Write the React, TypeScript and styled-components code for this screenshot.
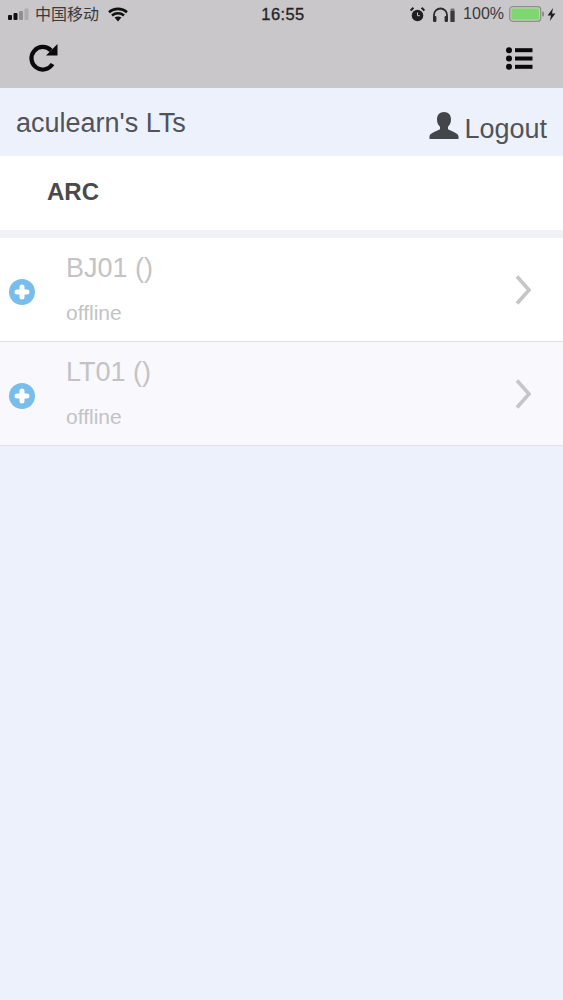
import React from "react";
import styled, { createGlobalStyle } from "styled-components";

const GlobalStyle = createGlobalStyle`
    html, body {
        margin: 0;
        padding: 0;
        background: #edf1fb;
    }
    body {
        font-family: "Liberation Sans", Arial, sans-serif;
    }
`;

const Page = styled.div`
    width: 563px;
    height: 1000px;
    overflow: hidden;
    background: #edf1fb;
    display: flex;
    flex-direction: column;
`;

const TopBar = styled.div`
    height: 88px;
    background: #c9c7c9;
    flex: none;
`;

const StatusBar = styled.div`
    height: 28px;
    display: grid;
    grid-template-columns: 1fr auto 1fr;
    align-items: center;
    padding: 0 7px 0 8px;
    color: #3a3a3c;
    font-size: 15px;
`;

const StatusLeft = styled.div`
    display: flex;
    align-items: center;
`;

const Carrier = styled.span`
    font-family: "Noto Sans CJK SC", "Liberation Sans", sans-serif;
    font-size: 16px;
    line-height: 20px;
    margin: -2px 0 0 4px;
`;

const StatusRight = styled.div`
    display: flex;
    align-items: center;
    justify-content: flex-end;
`;

const Clock = styled.span`
    font-size: 16.5px;
    font-weight: 400;
    color: #232325;
    -webkit-text-stroke: 0.3px #232325;
    letter-spacing: 0.4px;
    margin-left: 2px;
`;

const Percent = styled.span`
    font-size: 16px;
    margin: 0 5px 0 8px;
`;

const ToolRow = styled.div`
    height: 60px;
    display: flex;
    align-items: center;
    justify-content: space-between;
    padding: 0 30px 2px 28px;
`;

const Header = styled.div`
    height: 68px;
    flex: none;
    display: flex;
    justify-content: space-between;
    padding: 0 16px;
    color: #505358;
`;

const Title = styled.div`
    font-size: 27px;
    line-height: 30px;
    margin-top: 20px;
`;

const LogoutLink = styled.div`
    display: flex;
    align-items: flex-start;
    font-size: 27px;
    line-height: 30px;
    margin-top: 26px;
`;

const UserIcon = styled.svg`
    width: 30px;
    height: 30px;
    margin: -3px 5px 0 0;
    fill: #42464b;
`;

const SectionCard = styled.div`
    height: 74px;
    flex: none;
    background: #ffffff;
    display: flex;
    align-items: center;
    padding: 0 0 2px 47px;
    box-sizing: border-box;
    font-size: 24px;
    font-weight: 700;
    color: #4a4a4c;
`;

const Gap = styled.div`
    height: 8px;
    flex: none;
    background: #f0f2f6;
`;

const Row = styled.div<{ $alt?: boolean }>`
    height: 104px;
    box-sizing: border-box;
    flex: none;
    display: flex;
    align-items: center;
    background: ${(p) => (p.$alt ? "#f9f8fc" : "#ffffff")};
    border-bottom: 1px solid #e1e1e4;
    padding: 0 32px 0 9px;
`;

const PlusIcon = styled.svg`
    width: 26px;
    height: 26px;
    flex: none;
    margin-top: 4px;
`;

const RowText = styled.div`
    flex: 1;
    margin-left: 31px;
    color: #c3c3c5;
    align-self: flex-start;
`;

const RowName = styled.div`
    font-size: 27px;
    line-height: 32px;
    margin-top: 14px;
`;

const RowStatus = styled.div`
    font-size: 21px;
    line-height: 24px;
    margin-top: 17px;
`;

const Chevron = styled.svg`
    width: 16px;
    height: 30px;
    flex: none;
    fill: none;
    stroke: #c6c6c8;
    stroke-width: 3.6;
`;

const SignalBars = () => (
    <svg width="23" height="12" viewBox="0 0 23 12">
        <rect x="0" y="7" width="4" height="5" rx="1" fill="#111" />
        <rect x="5.500" y="5" width="4" height="7" rx="1" fill="#111" />
        <rect x="11" y="3" width="4" height="9" rx="1" fill="#8f8e90" />
        <rect x="16.500" y="0.500" width="4" height="11.500" rx="1" fill="#adacae" />
    </svg>
);

const Wifi = () => (
    <svg width="20" height="15" viewBox="0 0 20 15" style={{ marginLeft: 9 }}>
        <path d="M1 5.200C6 .8 14 .8 19 5.200" fill="none" stroke="#111" strokeWidth="2.600" />
        <path d="M4 8.400c3.400-2.900 8.600-2.900 12 0" fill="none" stroke="#111" strokeWidth="2.600" />
        <path d="M6.600 10.600c2-1.500 4.800-1.500 6.800 0L10 14.400z" fill="#111" />
    </svg>
);

const Alarm = () => (
    <svg width="15" height="15" viewBox="0 0 15 15" style={{ marginRight: 7 }}>
        <circle cx="7.500" cy="8.500" r="5.800" fill="#1f1f20" />
        <path d="M7.500 5.500v3.200h2.300" fill="none" stroke="#c9c7c9" strokeWidth="1" />
        <path d="M.6 3.600 3.400.8M14.400 3.600 11.600.8" stroke="#1f1f20" strokeWidth="2" />
    </svg>
);

const Headphones = () => (
    <svg width="23" height="15" viewBox="0 0 23 15">
        <path d="M2 13V8a6.500 6.500 0 0 1 13 0v5" fill="none" stroke="#2c2c2e" strokeWidth="1.800" />
        <rect x="1" y="9" width="3.400" height="6" rx="1.200" fill="#2c2c2e" />
        <rect x="12.600" y="9" width="3.400" height="6" rx="1.200" fill="#2c2c2e" />
        <rect x="18.500" y="1.500" width="4" height="13.500" rx="1" fill="#6d6c6e" />
        <rect x="18.500" y="4" width="4" height="11" fill="#3a3a3c" />
    </svg>
);

const Battery = () => (
    <svg width="36" height="16" viewBox="0 0 36 16">
        <rect x="0.700" y="0.700" width="31" height="14.600" rx="3" fill="none" stroke="#8f8f88" strokeWidth="1.200" />
        <rect x="2.400" y="2.400" width="27.600" height="11.200" rx="1.500" fill="#7fd86f" />
        <rect x="33" y="5.500" width="2" height="5" rx="1" fill="#8f8f88" />
    </svg>
);

const Bolt = () => (
    <svg width="9" height="13" viewBox="0 0 9 13" style={{ marginLeft: 2 }}>
        <path d="M6 0 0.600 7.400H4L2.800 13 8.400 5.400H5z" fill="#1f1f20" />
    </svg>
);

const RefreshIcon = () => (
    <svg width="30" height="30" viewBox="0 0 30 30">
        <path d="M24.500 21A11.300 11.300 0 1 1 23 7.500" fill="none" stroke="#0a0a0a" strokeWidth="4.200" />
        <path d="M29.500 1V12.500H18z" fill="#0a0a0a" />
    </svg>
);

const ListIcon = () => (
    <svg width="27" height="23" viewBox="0 0 27 23">
        <circle cx="3" cy="3.200" r="3" fill="#0a0a0a" />
        <circle cx="3" cy="11.500" r="3" fill="#0a0a0a" />
        <circle cx="3" cy="19.800" r="3" fill="#0a0a0a" />
        <rect x="9" y="1.200" width="17.500" height="4" fill="#0a0a0a" />
        <rect x="9" y="9.500" width="17.500" height="4" fill="#0a0a0a" />
        <rect x="9" y="17.800" width="17.500" height="4" fill="#0a0a0a" />
    </svg>
);

const devices = [
    { name: "BJ01 ()", status: "offline", alt: false },
    { name: "LT01 ()", status: "offline", alt: true },
];

export default function App() {
    return (
        <Page>
            <GlobalStyle />
            <TopBar>
                <StatusBar>
                    <StatusLeft>
                        <SignalBars />
                        <Carrier>中国移动</Carrier>
                        <Wifi />
                    </StatusLeft>
                    <Clock>16:55</Clock>
                    <StatusRight>
                        <Alarm />
                        <Headphones />
                        <Percent>100%</Percent>
                        <Battery />
                        <Bolt />
                    </StatusRight>
                </StatusBar>
                <ToolRow>
                    <RefreshIcon />
                    <ListIcon />
                </ToolRow>
            </TopBar>
            <Header>
                <Title>aculearn's LTs</Title>
                <LogoutLink>
                    <UserIcon viewBox="0 0 30 30">
                        <path d="M15 1c4.400 0 7 3 7 7.400 0 3-1.200 5.600-3 7.300v2.300c0 1.400 9.500 3 10.500 7V28H.5v-3c1-4 10.500-5.600 10.500-7v-2.300c-1.800-1.700-3-4.300-3-7.300C8 4 10.600 1 15 1z" />
                    </UserIcon>
                    Logout
                </LogoutLink>
            </Header>
            <SectionCard>ARC</SectionCard>
            <Gap />
            {devices.map((d) => (
                <Row key={d.name} $alt={d.alt}>
                    <PlusIcon viewBox="0 0 26 26">
                        <circle cx="13" cy="13" r="13" fill="#79bdeb" />
                        <path d="M13 8v10M8 13h10" stroke="#fff" strokeWidth="5" strokeLinecap="round" />
                    </PlusIcon>
                    <RowText>
                        <RowName>{d.name}</RowName>
                        <RowStatus>{d.status}</RowStatus>
                    </RowText>
                    <Chevron viewBox="0 0 16 30">
                        <path d="M2 1.500 14 15 2 28.500" />
                    </Chevron>
                </Row>
            ))}
        </Page>
    );
}
